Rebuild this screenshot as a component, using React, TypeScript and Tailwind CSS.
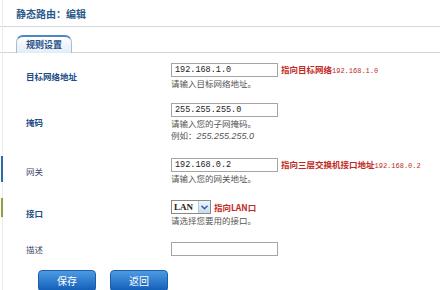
const cjk = { fontFamily: '"Noto Sans CJK SC", "Liberation Sans", sans-serif' };
const mono = { fontFamily: '"Liberation Mono", "Noto Sans CJK SC", monospace' };

function Field({ value }: { value?: string }) {
  return (
    <div
      className="w-[107px] h-[14px] border border-[#a5a5a5] bg-white pl-[3px] text-[8.5px] leading-[12px] text-[#222]"
      style={mono}
    >
      {value}
    </div>
  );
}

function Row({
  label,
  bold = true,
  children,
  className = '',
}: {
  label: string;
  bold?: boolean;
  children: React.ReactNode;
  className?: string;
}) {
  return (
    <div className={`flex items-center ${className}`}>
      <div
        className={`w-[171px] pl-[26px] text-[8.5px] leading-[12px] ${bold ? 'font-bold text-[#1d4d86]' : 'text-[#3a4b6b]'}`}
      >
        {label}
      </div>
      <div className="flex flex-col">{children}</div>
    </div>
  );
}

function Hint({ children }: { children: React.ReactNode }) {
  return <div className="h-[12px] text-[8.5px] leading-[12px] text-[#555]">{children}</div>;
}

function Note({ text, ip }: { text: string; ip?: string }) {
  return (
    <span className="ml-[3px] text-[8.5px] leading-[14px] font-bold text-[#c0281e]">
      {text}
      {ip && (
        <span className="font-normal text-[7px]" style={mono}>
          {ip}
        </span>
      )}
    </span>
  );
}

export default function App() {
  return (
    <div className="w-[440px] h-[290px] overflow-hidden bg-white relative" style={cjk}>
      <div className="absolute left-[2px] top-0 bottom-0 w-px bg-[#ececec]" />
      <div className="absolute left-[1px] top-[156px] h-[26px] w-[2px] bg-[#2a6bb0]" />
      <div className="absolute left-[1px] top-[198px] h-[19px] w-[2px] bg-[#8aa33a]" />

      <div className="pl-[16px] pt-[6px] h-[27px] text-[10px] leading-[15px] font-bold text-[#2b5a8a] border-b border-[#d5dbdc]">
        静态路由：编辑
      </div>

      <div className="mt-[8px] flex border-b border-[#cfd8dc] h-[18px] pl-[16px]">
        <div className="w-[56px] h-[18px] rounded-t-[7px] border border-b-0 border-[#a9bdd2] border-t-2 border-t-[#4f87c0] bg-gradient-to-b from-white to-[#e3ecf6] text-center text-[9px] font-bold leading-[15px] text-[#1f4f86]">
          规则设置
        </div>
      </div>

      <Row label="目标网络地址" className="mt-[10px]">
        <div className="flex h-[14px] items-center">
          <Field value="192.168.1.0" />
          <Note text="指向目标网络" ip="192.168.1.0" />
        </div>
        <Hint>请输入目标网络地址。</Hint>
      </Row>

      <Row label="掩码" className="mt-[14px]">
        <Field value="255.255.255.0" />
        <Hint>请输入您的子网掩码。</Hint>
        <div className="h-[12px] text-[8.5px] leading-[12px] text-[#555]">
          例如：<span className="italic text-[9px]" style={{ fontFamily: '"Liberation Sans", sans-serif' }}>255.255.255.0</span>
        </div>
      </Row>

      <Row label="网关" bold={false} className="mt-[17px]">
        <div className="flex h-[14px] items-center">
          <Field value="192.168.0.2" />
          <Note text="指向三层交换机接口地址" ip="192.168.0.2" />
        </div>
        <Hint>请输入您的网关地址。</Hint>
      </Row>

      <Row label="接口" className="mt-[16px]">
        <div className="flex h-[14px] items-center">
          <div className="flex h-[14px] w-[40px] items-center border border-[#8a8a8a] bg-white">
            <span className="flex-1 pl-[2px] text-[9px] font-bold leading-[12px] text-[#222]" style={{ fontFamily: '"Liberation Serif", serif' }}>
              LAN
            </span>
            <span className="flex h-[12px] w-[12px] items-center justify-center border-l border-[#b6c8dc] bg-gradient-to-b from-[#eef4fb] to-[#c9dbef]">
              <svg width="7" height="5" viewBox="0 0 7 5">
                <path d="M0.5 0.8 L3.5 3.8 L6.5 0.8" stroke="#2c5c9c" strokeWidth="1.4" fill="none" />
              </svg>
            </span>
          </div>
          <Note text="指向LAN口" />
        </div>
        <Hint>请选择您要用的接口。</Hint>
      </Row>

      <Row label="描述" bold={false} className="mt-[16px]">
        <Field />
      </Row>

      <div className="mt-[14px] flex gap-[14px] pl-[38px]">
        <button className="h-[22px] w-[58px] rounded-[4px] border border-[#1c5ea8] bg-gradient-to-b from-[#4d9be3] to-[#0f5db8] text-[10px] leading-[20px] text-white">
          保存
        </button>
        <button className="h-[22px] w-[58px] rounded-[4px] border border-[#1c5ea8] bg-gradient-to-b from-[#4d9be3] to-[#0f5db8] text-[10px] leading-[20px] text-white">
          返回
        </button>
      </div>
    </div>
  );
}
